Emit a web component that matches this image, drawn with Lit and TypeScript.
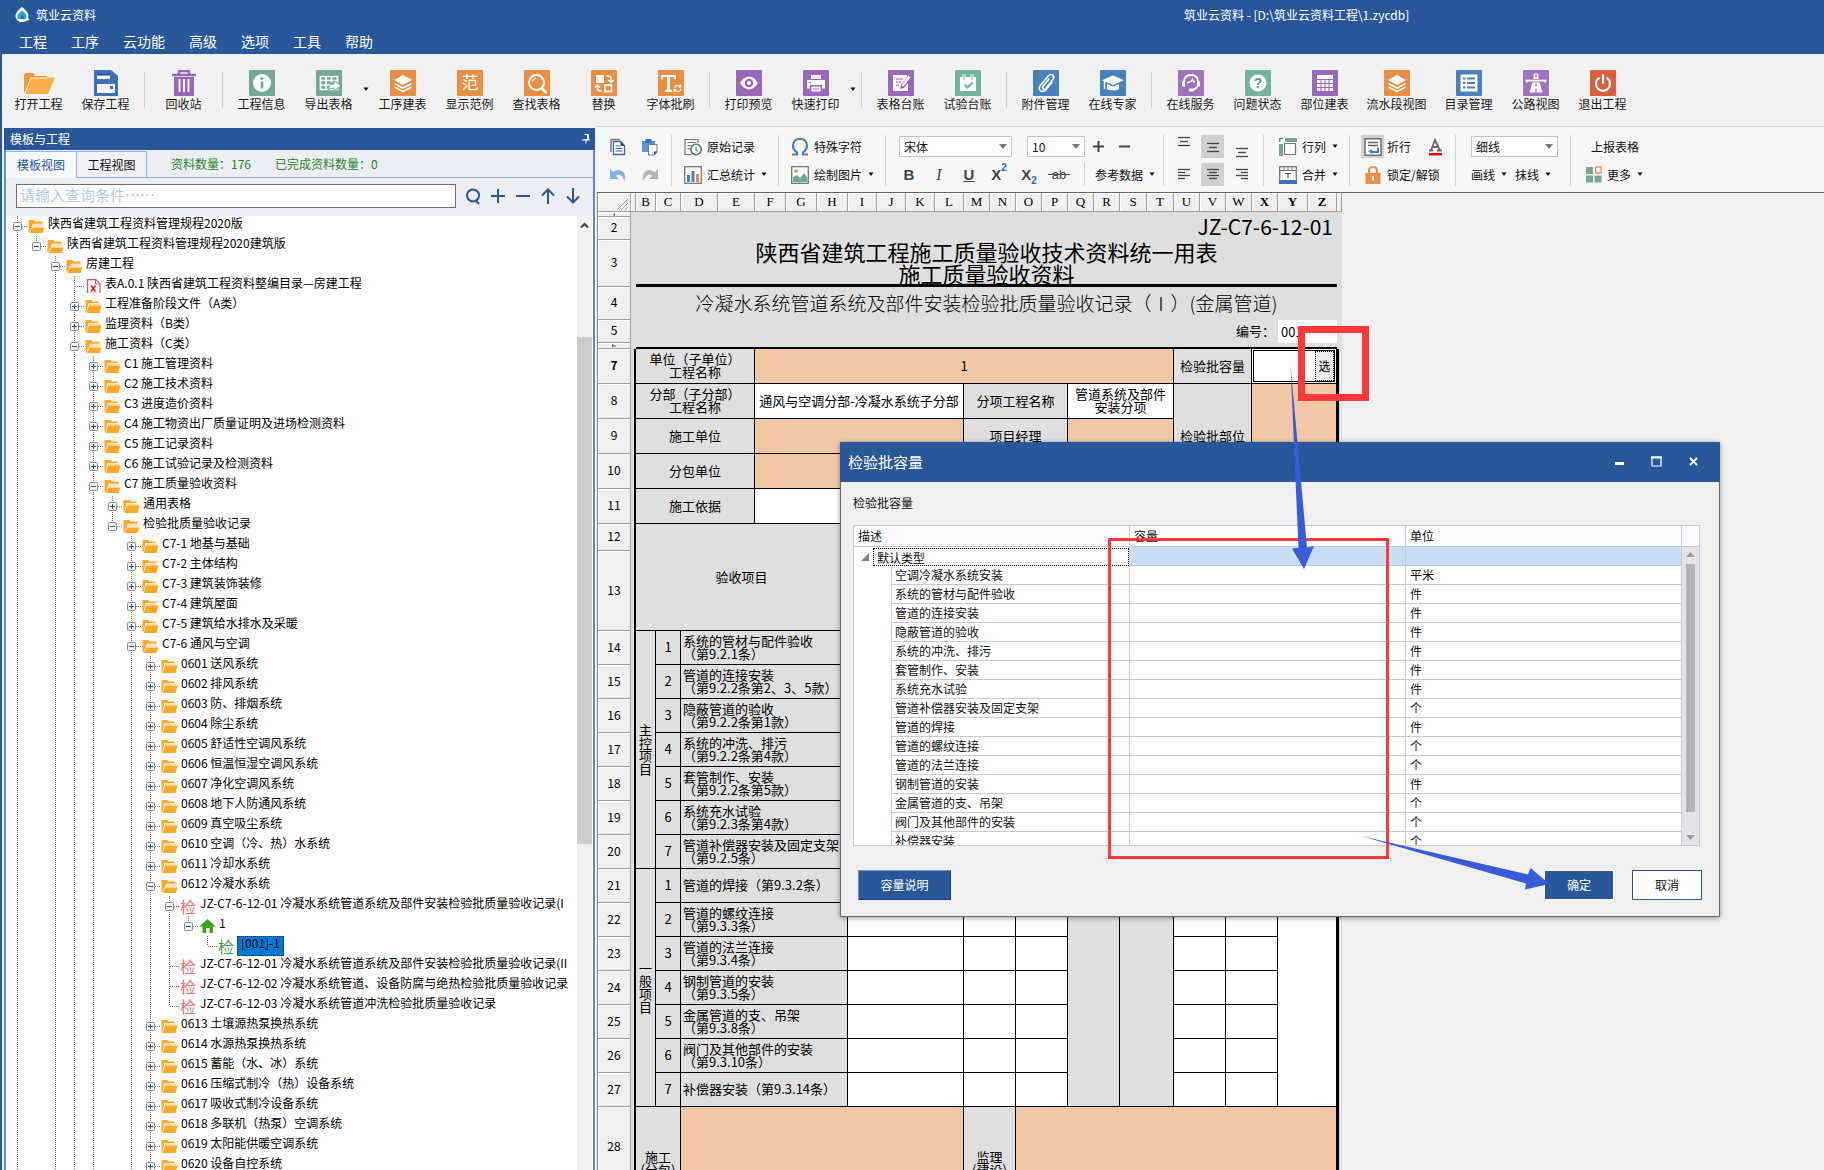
import { LitElement, html, svg, css, nothing, TemplateResult } from "lit";
import { customElement } from "lit/decorators.js";
import { classMap } from "lit/directives/class-map.js";

const ORANGE = "#e88f43";
const PURPLE = "#9a68ba";
const GREEN = "#74a894";
const BLUE = "#4a80ba";

const tile = (color: string, inner: unknown) => html`<svg width="26" height="26" viewBox="0 0 26 26" aria-hidden="true">
  <rect width="26" height="26" rx="1" fill=${color}></rect>${inner}</svg>`;

const layers = svg`<path d="M13 5l9 5-9 5-9-5z" fill="#fff"/><path d="M4.500 13.500l8.500 4.500 8.500-4.500M4.500 17l8.500 4.500 8.500-4.500" fill="none" stroke="#fff" stroke-width="1.600"/>`;

const ribbonIcons: Record<string, TemplateResult> = {
  open: html`<svg width="32" height="26" viewBox="0 0 32 26" aria-hidden="true"><path d="M1 23V5q0-2 2-2h7l2 3h12v3H9L3 23z" fill="#f29a35"/><path d="M8.500 7.500H32L25 24H2z" fill="#ffae49"/><path d="M2 23L8 8h16" fill="none" stroke="#fff" stroke-width="1"/></svg>`,
  save: html`<svg width="26" height="26" viewBox="0 0 26 26" aria-hidden="true"><path d="M1 0h17l7 6v20H1z" fill="#3f6fb5"/><path d="M4 4h13v5H4zM4 14h18v9H4z" fill="#f4f6fa"/><path d="M4 4h13v1.500H4z" fill="#274f8d"/><rect x="17" y="16" width="3" height="3" fill="#3f6fb5"/></svg>`,
  bin: html`<svg width="26" height="26" viewBox="0 0 26 26" aria-hidden="true"><path d="M8 4V1h10v3M1 5h24" fill="none" stroke="#9a68ba" stroke-width="2.600"/><path d="M3 7h20v19H3z" fill="#9a68ba"/><path d="M8.500 9v13M13 9v13M17.500 9v13" stroke="#f4eef8" stroke-width="2"/></svg>`,
  info: tile(GREEN, svg`<circle cx="13" cy="13" r="9" fill="#fff"/><circle cx="13" cy="8.500" r="1.500" fill="${GREEN}"/><path d="M13 11.500v7" stroke="${GREEN}" stroke-width="2.600"/>`),
  exportT: tile(GREEN, svg`<path d="M4.500 6.500h17v13h-17zM4.500 10.500h17M4.500 15h12M10 6.500v13M15.500 6.500v6" fill="none" stroke="#fff" stroke-width="1.700"/><path d="M12 20q1-6 6-6v-3.500l7 5.500-7 5v-3q-4 0-6 2z" fill="#fff" stroke="${GREEN}" stroke-width="1"/>`),
  layers: tile(ORANGE, layers),
  sample: tile(ORANGE, svg`<text x="13" y="19" text-anchor="middle" font-size="17" fill="#fff" font-family="Noto Sans CJK SC">范</text>`),
  find: tile(ORANGE, svg`<circle cx="12.500" cy="12.500" r="7.500" fill="none" stroke="#fff" stroke-width="2"/><path d="M18 18.500l4.500 4.500" stroke="#fff" stroke-width="2.600"/><path d="M8.500 12q.5-3 3.500-4" fill="none" stroke="#fff" stroke-width="1.200"/>`),
  swap: tile(ORANGE, svg`<rect x="5" y="5" width="8" height="8" fill="#fff"/><rect x="14" y="15" width="6.500" height="6.500" fill="none" stroke="#fff" stroke-width="1.800"/><path d="M15 6h2.500q2.500 0 2.500 2.500V12M17.500 10l2.500 2.500 2.500-2.500M11 21H9q-2.500 0-2.500-2.500V15.500M4 17.500L6.500 15 9 17.500" fill="none" stroke="#fff" stroke-width="1.500"/>`),
  fontT: tile(ORANGE, svg`<path d="M3 5h15v4.500h-1.500L15.500 7H12v12.500l2 .7V22H7v-1.800l2-.7V7H5.500l-1 2.500H3z" fill="#fff"/><path d="M16.500 18q1-3 3.500-2.500 2 .2 2.500 1.500M23 18.500q-.5 3-3.500 3-2 0-3-1.500M22.800 14.500v2.500h-2.500M16 22v-2.300h2.400" fill="none" stroke="#fff" stroke-width="1.200"/>`),
  eye: tile(PURPLE, svg`<path d="M4 13q4-6.500 9-6.500t9 6.500q-4 6.500-9 6.500T4 13z" fill="#fff"/><circle cx="13" cy="13" r="4.300" fill="${PURPLE}"/><circle cx="13" cy="13" r="2" fill="#fff"/>`),
  print: tile(PURPLE, svg`<path d="M8 5h10v4H8zM4 10h18v8.500h-3V15H7v3.500H4zM8.500 16.500h9v5h-9z" fill="#fff"/><path d="M6 12.500h2" stroke="${PURPLE}" stroke-width="1.200"/><path d="M10 19h6" stroke="${PURPLE}"/>`),
  note: tile(PURPLE, svg`<path d="M5 5h14v2l-6 8-1 4 4-1 4-5v8H5z" fill="#fff"/><path d="M14.500 14l6-8.500 2 1.500-6 8.500-2.500 1z" fill="#fff"/><path d="M8 9h7M8 12h5M8 15h3" stroke="${PURPLE}" stroke-width="1.200"/>`),
  cal: tile("#74b39c", svg`<path d="M5 7h16v14H5z" fill="#fff"/><path d="M9 4.500v5M17 4.500v5" stroke="#fff" stroke-width="3.200"/><path d="M9 5v4.500M17 5v4.500" stroke="#74b39c" stroke-width="1.200"/><path d="M9.500 14.500l3 3 5-5" fill="none" stroke="#74b39c" stroke-width="2"/>`),
  clip: tile(BLUE, svg`<path d="M16 9l-6 7.500q-.8 1.800.6 2.600 1.200.6 2.400-.8l7-9q1.800-2.600-.5-4.300-2.200-1.300-4.200 1L7 16q-1.800 3.200.8 5 2.800 1.400 5-1l6-7.500" fill="none" stroke="#fff" stroke-width="1.600" stroke-linecap="round"/>`),
  cap: tile(BLUE, svg`<path d="M13 5.500l11 4.800-11 4.700L2 10.300z" fill="#fff"/><path d="M7 14l6 2.500 6-2.500v5.500q-6 2-12 0z" fill="#fff"/><path d="M4.500 11v8" stroke="#fff" stroke-width="1.500"/>`),
  headset: tile("#a273bd", svg`<path d="M6 13.500V12q0-7 7-7t7 7v1.500q0 5-5.500 6.500" fill="none" stroke="#fff" stroke-width="1.900"/><path d="M4 11.500h3v5H4zM19 11.500h3v5h-3z" fill="#fff"/><path d="M9 12.500q4 0 5.500-3 .5 2 2.500 3" fill="none" stroke="#fff" stroke-width="1.300"/><rect x="11" y="18.500" width="5" height="3" rx="1" fill="#fff"/>`),
  help: tile("#74b39c", svg`<circle cx="13" cy="13" r="8.500" fill="#fff"/><text x="13" y="18.200" text-anchor="middle" font-size="14" font-weight="700" fill="#5d9f88" font-family="Liberation Sans">?</text>`),
  grid: tile(PURPLE, svg`<path d="M5 5h16v16H5z" fill="#fff"/><path d="M5 9.500h16M5 13.500h16M5 17.500h16M9 9v12M13 9v12M17 9v12" stroke="${PURPLE}" stroke-width="1.100"/>`),
  list: tile(BLUE, svg`<path d="M4.500 4.500h17v17h-17z" fill="#fff"/><path d="M7 8.500h2.500M7 13h2.500M7 17.500h2.500M11 8.500h8M11 13h8M11 17.500h8" stroke="${BLUE}" stroke-width="2"/>`),
  road: tile("#a273bd", svg`<path d="M11 3.500h4l1 5.500h-6zM9.300 12.500h7.400l2.800 10H6.500z" fill="#fff"/><path d="M2.500 10.700h21M4 10v2.500M22 10v2.500" stroke="#fff" stroke-width="1.700"/><path d="M13 4v3M13 13.500v3M13 18.500v4" stroke="#a273bd" stroke-width="1.400"/>`),
  power: tile("#d95f3f", svg`<path d="M8.800 8.200a7 7 0 1 0 8.400 0" fill="none" stroke="#fff" stroke-width="2.200" stroke-linecap="round"/><path d="M13 5v8" stroke="#fff" stroke-width="2.200" stroke-linecap="round"/>`),
};

type RibbonItem = [string, string] | "sep" | "more";
const ribbon: RibbonItem[] = [
  ["open", "打开工程"], ["save", "保存工程"], "sep", ["bin", "回收站"], "sep",
  ["info", "工程信息"], ["exportT", "导出表格"], "more",
  ["layers", "工序建表"], ["sample", "显示范例"], ["find", "查找表格"], ["swap", "替换"], ["fontT", "字体批刷"], "sep",
  ["eye", "打印预览"], ["print", "快速打印"], "more", "sep",
  ["note", "表格台账"], ["cal", "试验台账"], "sep", ["clip", "附件管理"], ["cap", "在线专家"], "sep",
  ["headset", "在线服务"], ["help", "问题状态"], ["grid", "部位建表"], ["layers", "流水段视图"],
  ["list", "目录管理"], ["road", "公路视图"], ["power", "退出工程"],
];

const caret = html`<svg class="caret" width="8" height="5" viewBox="0 0 8 5" aria-hidden="true"><path d="M1.500 .5h5L4 4z" fill="#111"/></svg>`;
const ic = (inner: unknown, w = 18, h = 18) => html`<svg width=${w} height=${h} viewBox="0 0 ${w} ${h}" aria-hidden="true">${inner}</svg>`;

@customElement("app-ribbon")
export class AppRibbon extends LitElement {
  static styles = css`
    :host { display: flex; height: 72px; background: #f1f1f1; padding: 0 3px; box-sizing: border-box; overflow: hidden; }
    button { flex: none; width: 67px; padding: 16px 0 0; margin: 0; border: 0; background: none; display: flex; flex-direction: column; align-items: center; font: 12px/16px "Noto Sans CJK SC", sans-serif; color: #1a1a1a; white-space: nowrap; height: 72px; }
    button.wide { width: 77px; }
    svg { flex: none; }
    .sep { flex: none; width: 1px; height: 36px; margin: 18px 5px 0; background: #cfcfcf; }
    button.more { width: 7px; padding-top: 33px; }
  `;
  render() {
    return ribbon.map((i) =>
      i === "sep" ? html`<span class="sep"></span>`
      : i === "more" ? html`<button class="more" aria-label="more">${caret}</button>`
      : html`<button class=${classMap({ wide: i[1].length > 4 })}>${ribbonIcons[i[0]]}<span>${i[1]}</span></button>`);
  }
}

const lines = (rows: [number, number, number][]) => ic(rows.map(([a, b, y]) => svg`<path d="M${a} ${y}.500H${b}" stroke="#444" stroke-width="1.300"/>`), 14, 14);

@customElement("format-bar")
export class FormatBar extends LitElement {
  static styles = css`
    :host { display: flex; height: 67px; box-sizing: border-box; padding-top: 8px; background: #f6f6f6; border-top: 1px solid #cfccdc; border-bottom: 1px solid #666; overflow: hidden; font: 12px/16px "Noto Sans CJK SC", sans-serif; color: #111; }
    .group { flex: none; display: flex; flex-direction: column; gap: 5px; padding: 0 10px 0 12px; border-right: 1px solid #d2d2d8; height: 51px; white-space: nowrap; }
    .group:last-child { border: 0; }
    .row { display: flex; align-items: center; height: 23px; }
    button { display: flex; align-items: center; gap: 5px; font: inherit; color: inherit; border: 0; background: none; padding: 0; margin: 0; height: 23px; }
    svg { flex: none; }
    .clipboard { padding: 0 5px; }
    .clipboard button { width: 32px; justify-content: center; }
    .type { padding: 0 7px 0 8px; }
    .type .row:first-child { padding-left: 5px; }
    .fmt { width: 30px; justify-content: center; font: 700 15px/20px "Liberation Sans", sans-serif; color: #444; gap: 0; }
    .fmt i { font-family: "Liberation Serif", serif; font-size: 16px; font-weight: 400; }
    .fmt sup, .fmt sub { font-size: 10px; color: #3568b2; line-height: 10px; }
    .fmt sup { align-self: flex-start; }
    .fmt sub { align-self: flex-end; }
    .fmt s { font-size: 13px; font-weight: 400; }
    .step { width: 26px; justify-content: center; }
    .pick { position: relative; display: flex; align-items: center; }
    .pick svg { position: absolute; right: 5px; pointer-events: none; }
    select { appearance: none; border: 1px solid #c3c3dc; background: #fff; height: 21px; padding: 0 4px; margin: 0; font: 12px/16px "Noto Sans CJK SC", sans-serif; color: #111; border-radius: 0; }
    .face select { width: 113px; }
    .face { margin-right: 15px; }
    .size select { width: 58px; }
    .line select { width: 87px; }
    .rule { width: 1px; height: 23px; background: #d2d2d8; margin: 0 10px; }
    .aligns { padding: 0 7px 0 5px; }
    .aligns button { width: 23px; margin: 0 3px; justify-content: center; }
    .aligns button.on, .wrapIcon.on { background: #d0d0d0; }
    .high svg { margin-bottom: 8px; }
    .low svg { margin-top: 8px; }
    .cells { padding: 0 10px 0 15px; }
    .wrap { padding: 0 12px 0 11px; }
    .wrap button { gap: 3px; }
    .wrapIcon { width: 23px; height: 23px; display: flex; align-items: center; justify-content: center; }
    .color { margin-left: 17px; }
    .stroke { padding: 0 12px 0 15px; }
    .stroke .row { gap: 7px; }
    .last { padding-left: 15px; }
    .last .row:first-child { padding-left: 5px; }
  `;
  private pick(cls: string, label: string, value: string) {
    return html`<label class="pick ${cls}"><select aria-label=${label}><option>${value}</option></select>${ic(svg`<path d="M0 0h8L4 5z" fill="#777"/>`, 8, 5)}</label>`;
  }
  render() {
    return html`
      <div class="group clipboard">
        <div class="row">
          <button aria-label="复制">${ic(svg`<path d="M2 14V1.500h9" fill="none" stroke="#777" stroke-width="1.500"/><path d="M4.500 3.500h7l4 4v9h-11z" fill="#fff" stroke="#3568b2" stroke-width="1.300"/><path d="M11.500 3v5h4.500z" fill="#274f8d"/><path d="M6.500 8h5M6.500 10.500h7M6.500 13h7" stroke="#3568b2" stroke-width="1.200"/>`)}</button>
          <button aria-label="粘贴">${ic(svg`<path d="M1 3h13v11H1z" fill="#5d92d8"/><path d="M4.500 1h6v4h-6z" fill="#3b70ba"/><path d="M7.500 6.500h8.500V14l-2.500 3h-6z" fill="#fff" stroke="#777"/><path d="M13 17v-3.500h3z" fill="#274f8d"/>`)}</button>
        </div>
        <div class="row">
          <button aria-label="撤销">${ic(svg`<path d="M1 3v10h9l-3.200-3.200q6-3.500 8.700 5.700 2.500-10.500-5.500-11.500-3 0-6 2z" fill="#84b0e6"/>`)}</button>
          <button aria-label="重做">${ic(svg`<path d="M17 3v10H8l3.200-3.200q-6-3.500-8.700 5.700Q0 5 8 4q3 0 6 2z" fill="#b4b4b4"/>`)}</button>
        </div>
      </div>
      <div class="group">
        <div class="row"><button>${ic(svg`<path d="M14 5V1.500H1v15h7" fill="none" stroke="#777" stroke-width="1.200"/><path d="M3.500 4.500h8M3.500 7.500h4M3.500 10.500h3" stroke="#777"/><circle cx="12" cy="11.500" r="5.200" fill="#fff" stroke="#4a8672" stroke-width="1.600"/><path d="M12 8.500v3.500l2 1.500" fill="none" stroke="#4a8672" stroke-width="1.200"/>`)}<span>原始记录</span></button></div>
        <div class="row"><button>${ic(svg`<rect x=".7" y=".7" width="16.600" height="16.600" fill="#fff" stroke="#777" stroke-width="1.300"/><path d="M3 9h3v7H3zM7.500 5h3v11h-3z" fill="#4a80ba"/><path d="M12 8h3v8h-3z" fill="#e08e40"/>`)}<span>汇总统计</span>${caret}</button></div>
      </div>
      <div class="group">
        <div class="row"><button>${ic(svg`<path d="M1 16.500h5v-2Q2 11.500 2 7.500 2.500 1 9 1t7 6.500q0 4-4 7v2h5" fill="none" stroke="#4a80ba" stroke-width="2.200"/>`)}<span>特殊字符</span></button></div>
        <div class="row"><button>${ic(svg`<rect x=".7" y=".7" width="16.600" height="16.600" fill="#fff" stroke="#777" stroke-width="1.300"/><circle cx="5" cy="5" r="1.800" fill="#e08e40"/><path d="M2 16v-5l4-2 3 3 4-5 3.500 5v4z" fill="#74a894"/>`)}<span>绘制图片</span>${caret}</button></div>
      </div>
      <div class="group type">
        <div class="row">
          ${this.pick("face", "字体", "宋体")}${this.pick("size", "字号", "10")}
          <button class="step" aria-label="增大">${ic(svg`<path d="M5.500 0v11M0 5.500h11" stroke="#444" stroke-width="2"/>`, 11, 11)}</button>
          <button class="step" aria-label="减小">${ic(svg`<path d="M0 5.500h11" stroke="#444" stroke-width="2"/>`, 11, 11)}</button>
        </div>
        <div class="row">
          <button class="fmt">B</button><button class="fmt"><i>I</i></button><button class="fmt"><u>U</u></button>
          <button class="fmt">X<sup>2</sup></button><button class="fmt">X<sub>2</sub></button><button class="fmt"><s>&nbsp;ab&nbsp;</s></button>
          <span class="rule"></span><button>参考数据 ${caret}</button>
        </div>
      </div>
      <div class="group aligns">
        <div class="row">
          <button class="high" aria-label="顶端对齐">${lines([[1, 13, 1], [3, 11, 5], [1, 13, 9]])}</button>
          <button class="on" aria-label="垂直居中">${lines([[1, 13, 3], [3, 11, 7], [1, 13, 11]])}</button>
          <button class="low" aria-label="底端对齐">${lines([[1, 13, 4], [3, 11, 8], [1, 13, 12]])}</button>
        </div>
        <div class="row">
          <button aria-label="左对齐">${lines([[1, 13, 1], [1, 8, 4], [1, 13, 7], [1, 8, 10]])}</button>
          <button class="on" aria-label="居中">${lines([[1, 13, 1], [3, 11, 4], [1, 13, 7], [3, 11, 10]])}</button>
          <button aria-label="右对齐">${lines([[1, 13, 1], [6, 13, 4], [1, 13, 7], [6, 13, 10]])}</button>
        </div>
      </div>
      <div class="group cells">
        <div class="row"><button>${ic(svg`<path d="M6 0h12v4H6zM0 6h4v12H0z" fill="#74a894"/><path d="M.7 4V.7H4M5.500 5.500h11v11h-11z" fill="#fff" stroke="#777" stroke-width="1.200"/>`)}<span>行列</span>${caret}</button></div>
        <div class="row"><button>${ic(svg`<rect x=".7" y=".7" width="16.600" height="16.600" fill="#fff" stroke="#777" stroke-width="1.300"/><path d="M0 14h18v4H0z" fill="#3f73b7"/><path d="M1 4.500h16M5 1v3M9 1v3M13 1v3" stroke="#777"/><path d="M6 7.500h6M9 7.500v5" stroke="#555" stroke-width="1.200"/>`)}<span>合并</span>${caret}</button></div>
      </div>
      <div class="group wrap">
        <div class="row">
          <button><span class="wrapIcon on">${ic(svg`<rect x="1" y=".8" width="16" height="16.400" fill="#fff" stroke="#666" stroke-width="1.400"/><path d="M4 4.500h10M4 7.500h10" stroke="#666" stroke-width="1.300"/><path d="M14 9.500V14H6" fill="none" stroke="#4a80ba" stroke-width="2"/><path d="M8 11v5l-4-2.500z" fill="#4a80ba"/>`)}</span>折行</button>
          <button class="color" aria-label="文字颜色">${ic(svg`<path d="M1 12.500h4M9 12.500h5M3 12.500L7 2l5 10.500M4.500 9h5" fill="none" stroke="#666" stroke-width="1.800"/><path d="M1 15h13v2.500H1z" fill="#f00"/>`, 15, 18)}</button>
        </div>
        <div class="row"><button><span class="wrapIcon">${ic(svg`<path d="M5 8V4.500Q5 1 9 1t4 3.500V8" fill="none" stroke="#e88f43" stroke-width="2"/><path d="M1.500 7h15v11h-15z" fill="#e88f43"/><path d="M9 10v4.500" stroke="#fff" stroke-width="2"/>`)}</span>锁定/解锁</button></div>
      </div>
      <div class="group stroke">
        <div class="row">${this.pick("line", "线型", "细线")}</div>
        <div class="row"><button>画线${caret}</button><button>抹线${caret}</button></div>
      </div>
      <div class="group last">
        <div class="row"><button>上报表格</button></div>
        <div class="row"><button>${ic(svg`<path d="M0 1h7v7H0zM0 9.500h7v7H0zM8.500 9.500h7v7h-7z" fill="#74a894"/><rect x="9.500" y="1" width="5.500" height="6" fill="#fff" stroke="#e88f43" stroke-width="1.300"/>`, 16, 17)}<span>更多</span>${caret}</button></div>
      </div>`;
  }
}

type NodeKind = "open" | "shut" | "file" | "check" | "home" | "current";
type TreeNode = [number, NodeKind, string];
const tree: TreeNode[] = [
  [0, "open", "陕西省建筑工程资料管理规程2020版"],
  [1, "open", "陕西省建筑工程资料管理规程2020建筑版"],
  [2, "open", "房建工程"],
  [3, "file", "表A.0.1 陕西省建筑工程资料整编目录—房建工程"],
  [3, "shut", "工程准备阶段文件（A类）"],
  [3, "shut", "监理资料（B类）"],
  [3, "open", "施工资料（C类）"],
  [4, "shut", "C1 施工管理资料"],
  [4, "shut", "C2 施工技术资料"],
  [4, "shut", "C3 进度造价资料"],
  [4, "shut", "C4 施工物资出厂质量证明及进场检测资料"],
  [4, "shut", "C5 施工记录资料"],
  [4, "shut", "C6 施工试验记录及检测资料"],
  [4, "open", "C7 施工质量验收资料"],
  [5, "shut", "通用表格"],
  [5, "open", "检验批质量验收记录"],
  [6, "shut", "C7-1 地基与基础"],
  [6, "shut", "C7-2 主体结构"],
  [6, "shut", "C7-3 建筑装饰装修"],
  [6, "shut", "C7-4 建筑屋面"],
  [6, "shut", "C7-5 建筑给水排水及采暖"],
  [6, "open", "C7-6 通风与空调"],
  [7, "shut", "0601 送风系统"],
  [7, "shut", "0602 排风系统"],
  [7, "shut", "0603 防、排烟系统"],
  [7, "shut", "0604 除尘系统"],
  [7, "shut", "0605 舒适性空调风系统"],
  [7, "shut", "0606 恒温恒湿空调风系统"],
  [7, "shut", "0607 净化空调风系统"],
  [7, "shut", "0608 地下人防通风系统"],
  [7, "shut", "0609 真空吸尘系统"],
  [7, "shut", "0610 空调（冷、热）水系统"],
  [7, "shut", "0611 冷却水系统"],
  [7, "open", "0612 冷凝水系统"],
  [8, "check", "JZ-C7-6-12-01 冷凝水系统管道系统及部件安装检验批质量验收记录(I"],
  [9, "home", "1"],
  [10, "current", "[001]-1"],
  [8, "check", "JZ-C7-6-12-01 冷凝水系统管道系统及部件安装检验批质量验收记录(II"],
  [8, "check", "JZ-C7-6-12-02 冷凝水系统管道、设备防腐与绝热检验批质量验收记录"],
  [8, "check", "JZ-C7-6-12-03 冷凝水系统管道冲洗检验批质量验收记录"],
  [7, "shut", "0613 土壤源热泵换热系统"],
  [7, "shut", "0614 水源热泵换热系统"],
  [7, "shut", "0615 蓄能（水、冰）系统"],
  [7, "shut", "0616 压缩式制冷（热）设备系统"],
  [7, "shut", "0617 吸收式制冷设备系统"],
  [7, "shut", "0618 多联机（热泵）空调系统"],
  [7, "shut", "0619 太阳能供暖空调系统"],
  [7, "shut", "0620 设备自控系统"],
];
/** Levels that still have siblings below the last loaded node. */
const openEnded = [0, 2, 3, 4, 6, 7];

function continues(index: number, level: number): boolean {
  for (let i = index + 1; i < tree.length; i++) {
    if (tree[i][0] < level) return false;
    if (tree[i][0] === level) return true;
  }
  return openEnded.includes(level);
}

@customElement("project-tree")
export class ProjectTree extends LitElement {
  static styles = css`
    :host { display: flex; flex-direction: column; min-height: 0; box-sizing: border-box; background: #edeef4; font: 12px/16px "Noto Sans CJK SC", sans-serif; border: solid #5b8ddb; border-width: 0 2px; }
    .head { display: flex; justify-content: space-between; align-items: center; height: 22px; flex: none; background: #2a579a; color: #fff; padding: 0 5px 0 6px; margin: 0 -2px; }
    .tabs { display: flex; height: 28px; flex: none; align-items: stretch; padding-top: 1px; box-sizing: border-box; color: #1f8a24; }
    .tab { width: 70px; border: 1px solid #93b3e6; border-left: 0; background: #f0f0f6; font: inherit; color: #111; padding: 0; }
    .tab.on { width: 71px; background: #f8f9fc; color: #2a579a; border-bottom: 0; }
    .counts { flex: 1; display: flex; gap: 24px; align-items: center; border-bottom: 1px solid #93b3e6; padding-left: 24px; }
    .search { display: flex; align-items: center; height: 36px; flex: none; padding: 0 12px 2px 10px; gap: 9px; }
    input { flex: 1; min-width: 0; height: 24px; box-sizing: border-box; border: 1px solid #6f6f6f; padding: 0 3px 3px; font: 15px/20px "Noto Sans CJK SC", sans-serif; background: #fff; }
    input::placeholder { color: #b3cdeb; opacity: 1; }
    .tool { border: 0; background: none; padding: 0; width: 16px; height: 18px; display: flex; align-items: center; justify-content: center; }
    .body { flex: 1; min-height: 0; display: flex; background: #fff; }
    .rows { flex: 1; min-width: 0; overflow: hidden; padding-left: 2px; }
    .node { display: flex; height: 20px; white-space: nowrap; color: #000; }
    .node > svg { flex: none; }
    .icon { flex: none; width: 17px; padding-top: 3px; margin: 0 3px 0 1px; }
    .glyph { font: 16px/18px "Noto Sans CJK SC", sans-serif; padding-top: 1px; color: #f56a6a; }
    .glyph.green { color: #3fa04a; }
    .label { line-height: 13px; }
    .current .label { background: #0078d7; padding: 0 3px; margin-left: -1px; height: 20px; box-sizing: border-box; border: 1px dotted #1d3348; line-height: 12px; }
    .bar { flex: none; width: 15px; margin-right: 1px; background: #f0f0f0; display: flex; flex-direction: column; align-items: center; }
    .bar svg { margin: 6px 0; }
    .thumb { width: 15px; margin-top: 103px; height: 507px; background: #cdcdcd; }
  `;
  private icon(kind: NodeKind) {
    if (kind === "check") return html`<span class="icon glyph">检</span>`;
    if (kind === "current") return html`<span class="icon glyph green">检</span>`;
    const art = kind === "home" ? svg`<path d="M8 0l8 7.500h-2.500V14h-3.500V9H6.500v5H3V7.500H0z" fill="#3aa80e"/>`
      : kind === "file" ? svg`<path d="M2 .7h8.500l4 4v9.600H2z" fill="#fff" stroke="#e85050" stroke-width="1.200"/><path d="M10 1v4h4" fill="none" stroke="#e85050"/><path d="M5.500 6.500l4.500 6M10 6.500l-4.500 6" stroke="#e02020" stroke-width="1.600"/>`
      : kind === "open" ? svg`<path d="M0 1h6l1 1.500h7V5H5L1 13H0z" fill="#ffa726"/><path d="M4.500 4.500h10.500V8H3z" fill="#fde5c0"/><path d="M4 8.500h12L14 14H1z" fill="#ffa726"/>`
      : svg`<path d="M0 1h6l1 1.500h6V4H3L1 13H0z" fill="#ffa726"/><path d="M3.500 4.500H15V6.500H3z" fill="#fcd9a4"/><path d="M3.500 6.500H16L14 14H1z" fill="#ffa726"/>`;
    return html`<svg class="icon" width="16" height="14" viewBox="0 0 16 14" aria-hidden="true">${art}</svg>`;
  }
  private branch(index: number, level: number, kind: NodeKind) {
    const cells: unknown[] = [];
    for (let k = 0; k < level; k++)
      cells.push(continues(index, k) ? svg`<path d="M${k * 19 + 9}.500 0v20" stroke="#777" stroke-dasharray="1 1"/>` : nothing);
    const x = level * 19;
    const next = tree[index + 1];
    const expanded = !!next && next[0] > level;
    cells.push(svg`<path d="M${x + 9}.500 0v${continues(index, level) ? 20 : 10}M${x + 10} 10.500h9" stroke="#777" stroke-dasharray="1 1" fill="none"/>`);
    if (expanded || kind === "shut")
      cells.push(svg`<rect x="${x + 5}.500" y="6.500" width="8" height="8" rx="1" fill="#f4f4f4" stroke="#8a8a8a"/><path d="M${x + 7} 10.500h5" stroke="#2b4f9e"/>${expanded ? nothing : svg`<path d="M${x + 9}.500 8v5" stroke="#2b4f9e"/>`}`);
    return html`<svg width=${x + 19} height="20" viewBox="0 0 ${x + 19} 20" aria-hidden="true">${cells}</svg>`;
  }
  private tool(label: string, d: string) {
    return html`<button class="tool" aria-label=${label}>${ic(svg`<path d=${d} fill="none" stroke="#2a579a" stroke-width="2"/>`, 16, 18)}</button>`;
  }
  render() {
    return html`
      <div class="head"><span>模板与工程</span>${ic(svg`<path d="M2.500 .5h4v5h-4M0 6h8M4 6v3.500" fill="none" stroke="#fff"/><path d="M5 .5h2V6H5z" fill="#fff"/>`, 8, 10)}</div>
      <div class="tabs">
        <button class="tab on">模板视图</button><button class="tab">工程视图</button>
        <div class="counts"><span>资料数量：176</span><span>已完成资料数量：0</span></div>
      </div>
      <div class="search">
        <input type="text" aria-label="查询条件" placeholder="请输入查询条件……" />
        ${this.tool("查询", "M8 2.500a6 6 0 1 0 .1 0M10 13l4 4")}
        ${this.tool("展开", "M8 2v14M1 9h14")}
        ${this.tool("折叠", "M1 9h14")}
        ${this.tool("上一个", "M8 17V3M2 8.500L8 2.500l6 6")}
        ${this.tool("下一个", "M8 1v14M2 9.500l6 6 6-6")}
      </div>
      <div class="body">
        <div class="rows" role="tree">
          ${tree.map(([level, kind, text], i) => html`<div class="node ${kind}" role="treeitem" aria-level=${level + 1}>${this.branch(i, level, kind)}${this.icon(kind)}<span class="label">${text}</span></div>`)}
        </div>
        <div class="bar">${ic(svg`<path d="M1 5.500l3.500-3.500L8 5.500" fill="none" stroke="#444" stroke-width="2"/>`, 9, 6)}<div class="thumb"></div></div>
      </div>`;
  }
}

const colWidths = [5, 20, 25, 37, 37, 31, 31, 31, 29, 29, 29, 29, 26, 26, 26, 26, 26, 26, 27, 27, 26, 26, 26, 26, 30, 29, 5];
const rowHeights = [5, 23, 47, 33, 23, 6, 35, 35, 35, 35, 35, 27, 80, ...Array(14).fill(34), 80];
type Cell = [unknown, number, string, number?];
const br = (...t: string[]) => t.map((s, i) => (i ? html`<br />${s}` : s));

const mainItems: [string, string][] = [
  ["系统的管材与配件验收", "（第9.2.1条）"], ["管道的连接安装", "（第9.2.2条第2、3、5款）"],
  ["隐蔽管道的验收", "（第9.2.2条第1款）"], ["系统的冲洗、排污", "（第9.2.2条第4款）"],
  ["套管制作、安装", "（第9.2.2条第5款）"], ["系统充水试验", "（第9.2.3条第4款）"],
  ["管道补偿器安装及固定支架", "（第9.2.5条）"],
];
const generalItems: string[][] = [
  ["管道的焊接（第9.3.2条）"], ["管道的螺纹连接", "（第9.3.3条）"], ["管道的法兰连接", "（第9.3.4条）"],
  ["钢制管道的安装", "（第9.3.5条）"], ["金属管道的支、吊架", "（第9.3.8条）"],
  ["阀门及其他部件的安装", "（第9.3.10条）"], ["补偿器安装（第9.3.14条）"],
];
const sheet: Cell[][] = [
  [["", 25, "e"]],
  [["JZ-C7-6-12-01", 25, "e code"]],
  [[br("陕西省建筑工程施工质量验收技术资料统一用表", "施工质量验收资料"), 25, "e title"]],
  [["冷凝水系统管道系统及部件安装检验批质量验收记录（Ⅰ）(金属管道)", 25, "e sub"]],
  [["编号：", 23, "e no"], ["001", 2, "e w id"]],
  [["", 25, "e top"]],
  [[br("单位（子单位）", "工程名称"), 4, "g"], ["1", 15, "p"], ["检验批容量", 3, "g"],
    [html`<div class="active"><button class="choose">选</button></div>`, 3, "w cell"]],
  [[br("分部（子分部）", "工程名称"), 4, "g"], ["通风与空调分部-冷凝水系统子分部", 7, "w"], ["分项工程名称", 4, "g"],
    [br("管道系统及部件", "安装分项"), 4, "w"], ["检验批部位", 3, "g", 3], ["", 3, "p", 3]],
  [["施工单位", 4, "g"], ["", 7, "p"], ["项目经理", 4, "g"], ["", 4, "p"]],
  [["分包单位", 4, "g"], ["", 7, "p"], ["", 4, "g"], ["", 4, "p"]],
  [["施工依据", 4, "g"], ["", 21, "w"]],
  [["验收项目", 7, "g", 2], ["", 18, "g", 2]],
  [],
  ...mainItems.map((t, i): Cell[] => [
    ...(i ? [] : [[br("主", "控", "项", "目"), 1, "g side", 7] as Cell]),
    [String(i + 1), 1, "g"], [br(...t), 5, "g l"], ["", 18, "w"]]),
  ...generalItems.map((t, i): Cell[] => [
    ...(i ? [] : [[br("一", "般", "项", "目"), 1, "g side", 7] as Cell]),
    [String(i + 1), 1, "g"], [br(...t), 5, "g l"], ["", 4, "w"], ["", 2, "w"], ["", 2, "w"],
    ...(i ? [] : [["", 2, "g", 7], ["", 2, "g", 7]] as Cell[]), ["", 2, "w"], ["", 2, "w"],
    ...(i ? [] : [["", 2, "w", 7] as Cell])]),
  [[br("施工", "(分包)"), 2, "g sign"], ["", 9, "p"], [br("监理", "(建设)"), 2, "g sign"], ["", 12, "p"]],
];

@customElement("form-sheet")
export class FormSheet extends LitElement {
  static styles = css`
    :host { display: block; overflow: hidden; background: #f0f0f0; }
    table { table-layout: fixed; border-collapse: separate; border-spacing: 0; width: 0; font: 13px/13px "Noto Sans CJK SC", sans-serif; color: #000; border-left: 1px solid #888; }
    th, td { padding: 0 0 2px; }
    th { font: 12px/14px "Noto Sans CJK SC", sans-serif; background: #f0f0f0; border: solid #a0a0a0; border-width: 0 1px 1px 0; box-shadow: inset 1px 1px 0 #fff; }
    thead th { font: 13px/14px "Liberation Serif", serif; padding: 0; }
    thead svg { display: block; }
    th.hot { font-weight: 700; }
    th.thin, td.e { padding: 0; }
    .tiny { display: block; height: 3px; line-height: 3px; font-size: 8px; overflow: hidden; }
    td { text-align: center; border: solid #000; border-width: 0 1px 1px 0; }
    td.e { border-width: 0; background: #dfdfdf; }
    td.g { background: #dfdfdf; }
    td.w { background: #fff; }
    td.p { background: #f0c8a6; }
    td.l { text-align: left; padding-left: 2px; white-space: nowrap; }
    td.a { border-width: 0 2px 0 0; background: #dfdfdf; }
    td.z { border-width: 0 0 0 2px; background: #dfdfdf; }
    td.cell { padding: 0; }
    td.code { text-align: right; font-size: 21px; line-height: 19px; padding: 0 4px 4px 0; }
    td.title { font-size: 22px; line-height: 22px; border-bottom-width: 3px; vertical-align: top; }
    td.sub { font-size: 19px; line-height: 20px; font-weight: 300; padding-bottom: 2px; }
    td.no { text-align: right; padding: 0 3px 2px 0; }
    td.id { text-align: left; padding: 0 0 0 3px; background: #fff; }
    td.top { border-bottom-width: 2px; }
    td.sign { vertical-align: top; padding-top: 43px; }
    .active { display: flex; justify-content: flex-end; box-sizing: border-box; height: 32px; margin: 1px; border: 1px solid #000; }
    .choose { width: 19px; height: 30px; border: 1px dotted #000; background: #ececec; font: 12px/14px "Noto Sans CJK SC", sans-serif; padding: 0; margin: 0; }
  `;
  render() {
    const names = colWidths.map((_, i) => (i > 0 && i < 26 ? String.fromCharCode(64 + i + 1) : ""));
    return html`<table>
      <colgroup><col style="width:33px" />${colWidths.map((w) => html`<col style="width:${w}px" />`)}</colgroup>
      <thead><tr style="height:19px"><th>${ic(svg`<path d="M19 16L30 5M23 16l7-7M27 16l3-3" stroke="#999" fill="none"/>`, 32, 16)}</th>
        ${names.map((n) => html`<th class=${classMap({ hot: n > "W" })}>${n}</th>`)}</tr></thead>
      <tbody>${sheet.map((cells, r) => html`<tr style="height:${rowHeights[r]}px">
        <th class=${classMap({ hot: r === 6, thin: rowHeights[r] < 10 })}>${rowHeights[r] < 10 ? html`<span class="tiny">${r + 1}</span>` : r + 1}</th>
        <td class=${r > 5 ? "a" : "e"}></td>
        ${cells.map(([t, cs, cls, rs]) => html`<td class=${cls} colspan=${cs} rowspan=${rs ?? 1}>${t}</td>`)}
        <td class=${r > 5 ? "z" : "e"}></td></tr>`)}</tbody>
    </table>`;
  }
}

const capacity: [string, string][] = [
  ["空调冷凝水系统安装", "平米"], ["系统的管材与配件验收", "件"], ["管道的连接安装", "件"], ["隐蔽管道的验收", "件"],
  ["系统的冲洗、排污", "件"], ["套管制作、安装", "件"], ["系统充水试验", "件"], ["管道补偿器安装及固定支架", "个"],
  ["管道的焊接", "件"], ["管道的螺纹连接", "个"], ["管道的法兰连接", "个"], ["钢制管道的安装", "件"],
  ["金属管道的支、吊架", "个"], ["阀门及其他部件的安装", "个"], ["补偿器安装", "个"],
];

@customElement("capacity-dialog")
export class CapacityDialog extends LitElement {
  static styles = css`
    :host { display: flex; flex-direction: column; box-sizing: border-box; background: #f0f0f0; border: 1px solid #5c6b7c; border-top: 0; box-shadow: 0 1px 5px rgba(0, 0, 0, 0.4); font: 12px/16px "Noto Sans CJK SC", sans-serif; color: #111; }
    header { display: flex; align-items: center; height: 40px; flex: none; margin: 0 -1px; background: #2a579a; color: #fff; font-size: 15px; padding: 0 14px 0 8px; }
    header span { flex: 1; }
    header button { width: 24px; height: 24px; margin-left: 13px; padding: 0; border: 0; background: none; display: flex; align-items: center; justify-content: center; }
    .caption { padding: 13px 12px 14px; }
    .list { display: flex; flex-direction: column; height: 321px; box-sizing: border-box; margin: 0 19px 0 12px; border: 1px solid #c9c9da; background: #fff; overflow: hidden; }
    .view { display: flex; min-height: 0; flex: 1; }
    .clip { flex: 1; overflow: hidden; }
    table { width: 100%; table-layout: fixed; border-collapse: separate; border-spacing: 0; }
    .corner { width: 17px; flex: none; background: #fcfcfe; border-bottom: 1px solid #c9c9da; height: 20px; }
    th, td { padding: 0 4px; text-align: left; font-weight: 400; border: solid #c9c9da; border-width: 0 1px 1px 0; height: 18px; line-height: 18px; overflow: hidden; white-space: nowrap; }
    th { height: 20px; background: #fcfcfe; }
    td:first-child { padding: 0 0 0 37px; border-bottom: 0; }
    td .name { display: block; border: solid #c9c9da; border-width: 0 0 1px 1px; padding-left: 3px; height: 18px; }
    tr.sel td { background: #c9def5; }
    tr.sel td:first-child { background: #fff; padding: 0; }
    .root { display: flex; align-items: center; height: 19px; }
    .root svg { margin: 0 4px 0 7px; }
    .root span { flex: 1; border: 1px dotted #000; line-height: 17px; padding-left: 3px; height: 18px; box-sizing: border-box; }
    .side { display: flex; flex-direction: column; flex: none; }
    .bar { flex: 1; width: 17px; background: #e4e4e8; display: flex; flex-direction: column; align-items: center; justify-content: space-between; padding: 5px 0; box-sizing: border-box; }
    .thumb { width: 9px; height: 248px; background: #b4b4b4; margin-bottom: 16px; }
    footer { display: flex; align-items: center; padding: 24px 17px 16px; gap: 18px; }
    footer button { font: inherit; height: 30px; width: 70px; padding: 0; border: 1px solid #2a579a; background: #fff; color: #111; box-sizing: border-box; }
    footer .help { width: 93px; margin-right: auto; background: #2a579a; color: #fff; border-color: #6e93c8 #1d4078 #1d4078 #6e93c8; }
    footer .ok { background: #2a579a; color: #fff; border-color: #fff; }
  `;
  render() {
    return html`
      <header><span>检验批容量</span>
        <button aria-label="最小化">${ic(svg`<path d="M1 6h9v3H1z" fill="#fff"/>`, 12, 12)}</button>
        <button aria-label="最大化">${ic(svg`<path d="M1 1h9v9H1z" fill="none" stroke="#fff" stroke-width="1.200"/><path d="M0 1.500h11" stroke="#fff" stroke-width="2"/>`, 12, 12)}</button>
        <button aria-label="关闭">${ic(svg`<path d="M2 2l7 7M9 2L2 9" stroke="#fff" stroke-width="1.800"/>`, 12, 12)}</button>
      </header>
      <div class="caption">检验批容量</div>
      <div class="list"><div class="view">
        <div class="clip"><table>
          <thead><tr><th>描述</th><th>容量</th><th>单位</th></tr></thead>
          <tbody>
            <tr class="sel"><td><div class="root">${ic(svg`<path d="M8 0v8H0z" fill="#888"/>`, 8, 8)}<span>默认类型</span></div></td><td></td><td></td></tr>
            ${capacity.map(([n, u]) => html`<tr><td><span class="name">${n}</span></td><td></td><td>${u}</td></tr>`)}
          </tbody></table></div>
        <div class="side"><div class="corner"></div><div class="bar">
          ${ic(svg`<path d="M0 5l4.500-5L9 5z" fill="#999"/>`, 9, 5)}<div class="thumb"></div>${ic(svg`<path d="M0 0h9L4.500 5z" fill="#999"/>`, 9, 5)}
        </div></div>
      </div></div>
      <footer><button class="help">容量说明</button><button class="ok">确定</button><button>取消</button></footer>`;
  }
}

@customElement("app-root")
export class AppRoot extends LitElement {
  static styles = css`
    :host { display: flex; flex-direction: column; position: relative; height: 100vh; overflow: hidden; background: #f0f0f0; font: 12px/16px "Noto Sans CJK SC", sans-serif; color: #fff; }
    .title { display: grid; grid-template-columns: 1184px 1fr; height: 30px; flex: none; background: #2a579a; align-items: center; }
    .brand { display: flex; gap: 6px; align-items: center; padding-left: 14px; }
    nav { display: flex; height: 24px; flex: none; background: #2a579a; padding-left: 7px; }
    nav a { color: #fff; text-decoration: none; font-size: 14px; line-height: 22px; padding: 0 12px; }
    .frame { flex: 1; min-height: 0; display: flex; flex-direction: column; border-left: 2px solid #2a579a; }
    .work { flex: 1; min-height: 0; display: flex; align-items: stretch; }
    project-tree { width: 591px; flex: none; margin: 2px 2px 0 2px; }
    .doc { flex: 1; min-width: 0; display: flex; flex-direction: column; }
    form-sheet { flex: 1; min-height: 0; }
    capacity-dialog { position: absolute; left: 840px; top: 442px; width: 880px; }
    .marks { position: absolute; left: 0; top: 0; pointer-events: none; }
  `;
  render() {
    return html`
      <div class="title">
        <div class="brand">${ic(svg`<path d="M8 0q6 4 6.500 9 0 5.500-6.500 5.500T1.500 9Q2 4 8 0z" fill="#fff"/><path d="M3.500 7.500L8 3.500l4.500 4V12h-9z" fill="#1fb0e6"/><path d="M7 8h2.500v4H7z" fill="#1d66b8"/><path d="M5 14q5 1 10-2" stroke="#fff" stroke-width="1.500" fill="none"/>`, 16, 16)}<span>筑业云资料</span></div>
        <span>筑业云资料 - [D:\\筑业云资料工程\\1.zycdb]</span>
      </div>
      <nav>${["工程", "工序", "云功能", "高级", "选项", "工具", "帮助"].map((m) => html`<a href="#">${m}</a>`)}</nav>
      <div class="frame">
        <app-ribbon></app-ribbon>
        <div class="work">
          <project-tree></project-tree>
          <div class="doc"><format-bar></format-bar><form-sheet></form-sheet></div>
        </div>
      </div>
      <capacity-dialog role="dialog" aria-label="检验批容量"></capacity-dialog>
      <svg class="marks" width="1824" height="1170" viewBox="0 0 1824 1170" aria-hidden="true">
        <rect x="1301.500" y="329.500" width="64" height="68" fill="none" stroke="#fd3a3a" stroke-width="7"/>
        <rect x="1109.500" y="539.500" width="278" height="318" fill="none" stroke="#fd3a3a" stroke-width="3"/>
        <path d="M1290.500 365L1307 547.500l7-1.500-10 23-12-20.500 6.500-.5zM1361 836l167 38.500 2.500-6.500 19 16-24.500 5.500 1-6z" fill="#3a5bd8"/>
      </svg>`;
  }
}
